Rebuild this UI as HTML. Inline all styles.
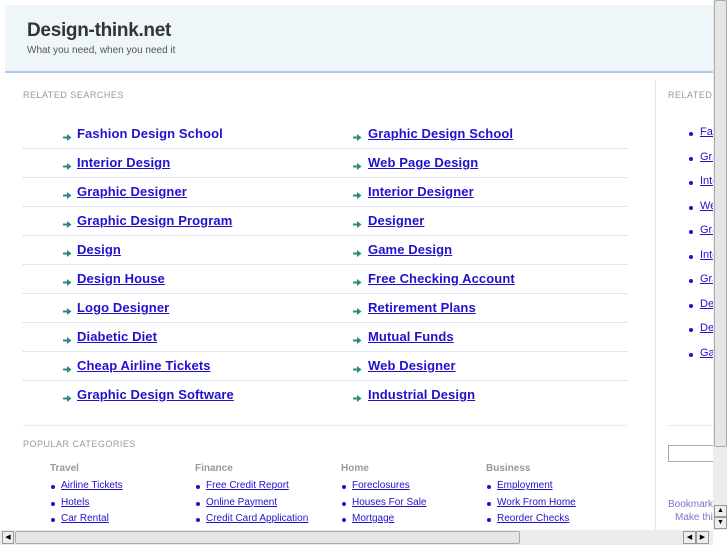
<!DOCTYPE html>
<html><head><meta charset="utf-8"><style>
*{margin:0;padding:0;box-sizing:border-box}
body{width:727px;height:545px;overflow:hidden;background:#fff;font-family:"Liberation Sans",Arial,sans-serif;position:relative}
.a{position:absolute;white-space:nowrap}
#hd{left:5px;top:5px;width:722px;height:68px;background:#eff6f9;border-bottom:2px solid #b4c8e8}
.t{left:27px;top:20px;font-size:19px;font-weight:bold;color:#333;letter-spacing:-0.3px}
.s{left:27px;top:45px;font-size:10px;color:#555}
.lab{font-size:9px;color:#999;letter-spacing:0.5px}
.lk{font-size:13px;font-weight:bold;color:#2211cc;text-decoration:underline}
.ar{width:9px;height:9px}
.dl{left:23px;width:604px;border-top:1px dotted #c3d3ea;height:0}
.ch{font-size:10px;font-weight:bold;color:#999}
.cl{font-size:10px;color:#2211cc;text-decoration:underline}
.rl{font-size:11px;color:#2211cc;text-decoration:underline}
.bu{width:4px;height:4px;background:#2211cc;border-radius:2px}
</style></head><body>
<div class="a" id="hd"></div>
<div class="a t">Design-think.net</div>
<div class="a s">What you need, when you need it</div>
<div class="a" style="left:655px;top:80px;width:1px;height:450px;background:#dde6f2"></div>
<div class="a lab" style="left:23px;top:90px">RELATED SEARCHES</div>
<div class="a lab" style="left:668px;top:90px">RELATED</div>
<div id="rows"></div>
<div class="a" style="left:23px;top:425px;width:604px;height:1px;background:#e3ebf4"></div>
<div class="a" style="left:668px;top:425px;width:50px;height:1px;background:#e3ebf4"></div>
<div class="a lab" style="left:23px;top:439px">POPULAR CATEGORIES</div>
<div class="a" style="left:668px;top:445px;width:50px;height:17px;border:1px solid #aaa"></div>
<div class="a" style="left:668px;top:499px;font-size:10px;color:#7777cc">Bookmark</div>
<div class="a" style="left:675px;top:512px;font-size:10px;color:#7777cc">Make thi</div>
<div id="cats"></div>
<div class="a" style="left:713px;top:0;width:14px;height:530px;background:#ececec"></div>
<div class="a" style="left:714px;top:0;width:13px;height:447px;background:#e6e6e6;border:1px solid #aaa;border-radius:2px"></div>
<div class="a" style="left:714px;top:505px;width:13px;height:12px;background:#eee;border:1px solid #999;font-size:7px;text-align:center;line-height:10px">▲</div>
<div class="a" style="left:714px;top:517px;width:13px;height:12px;background:#eee;border:1px solid #999;font-size:7px;text-align:center;line-height:10px">▼</div>
<div class="a" style="left:0;top:530px;width:713px;height:15px;background:#ececec"></div>
<div class="a" style="left:2px;top:531px;width:12px;height:13px;background:#eee;border:1px solid #999;font-size:7px;text-align:center;line-height:11px">◀</div>
<div class="a" style="left:15px;top:531px;width:505px;height:13px;background:#e6e6e6;border:1px solid #aaa;border-radius:2px"></div>
<div class="a" style="left:683px;top:531px;width:13px;height:13px;background:#eee;border:1px solid #999;font-size:7px;text-align:center;line-height:11px">◀</div>
<div class="a" style="left:696px;top:531px;width:13px;height:13px;background:#eee;border:1px solid #999;font-size:7px;text-align:center;line-height:11px">▶</div>
<script>
var L=["Fashion Design School","Interior Design","Graphic Designer","Graphic Design Program","Design","Design House","Logo Designer","Diabetic Diet","Cheap Airline Tickets","Graphic Design Software"];
var R=["Graphic Design School","Web Page Design","Interior Designer","Designer","Game Design","Free Checking Account","Retirement Plans","Mutual Funds","Web Designer","Industrial Design"];
var RS=["Fas","Gra","Inte","We","Gra","Inte","Gra","De","De","Ga"];
var arr='<svg class="ar" viewBox="0 0 9 9"><path d="M0 3.5h4V1l4.5 3.5L4 8V5.5H0z" fill="#2a8a80"/></svg>';
var h='';
for(var i=0;i<10;i++){var y=126+i*29;
h+='<div class="a" style="left:63px;top:'+(y+3)+'px">'+arr+'</div><div class="a lk" style="left:77px;top:'+y+'px;letter-spacing:0.1px;'+(i==0?'text-decoration:none':'')+'">'+L[i]+'</div>';
h+='<div class="a" style="left:353px;top:'+(y+3)+'px">'+arr+'</div><div class="a lk" style="left:368px;top:'+y+'px;letter-spacing:0.1px">'+R[i]+'</div>';
if(i<9)h+='<div class="a dl" style="top:'+(y+22)+'px"></div>';
var ry=126+i*24.5;
h+='<div class="a bu" style="left:689px;top:'+(ry+6)+'px"></div><div class="a rl" style="left:700px;top:'+ry+'px">'+RS[i]+'</div>';}
document.getElementById('rows').innerHTML=h;
var C=[["Travel",50,["Airline Tickets","Hotels","Car Rental"]],["Finance",195,["Free Credit Report","Online Payment","Credit Card Application"]],["Home",341,["Foreclosures","Houses For Sale","Mortgage"]],["Business",486,["Employment","Work From Home","Reorder Checks"]]];
h='';C.forEach(function(c){h+='<div class="a ch" style="left:'+c[1]+'px;top:463px">'+c[0]+'</div>';
c[2].forEach(function(t,j){var y=480+j*16.5;h+='<div class="a bu" style="left:'+(c[1]+1)+'px;top:'+(y+5)+'px"></div><div class="a cl" style="left:'+(c[1]+11)+'px;top:'+y+'px">'+t+'</div>';});});
document.getElementById('cats').innerHTML=h;
</script>
</body></html>
